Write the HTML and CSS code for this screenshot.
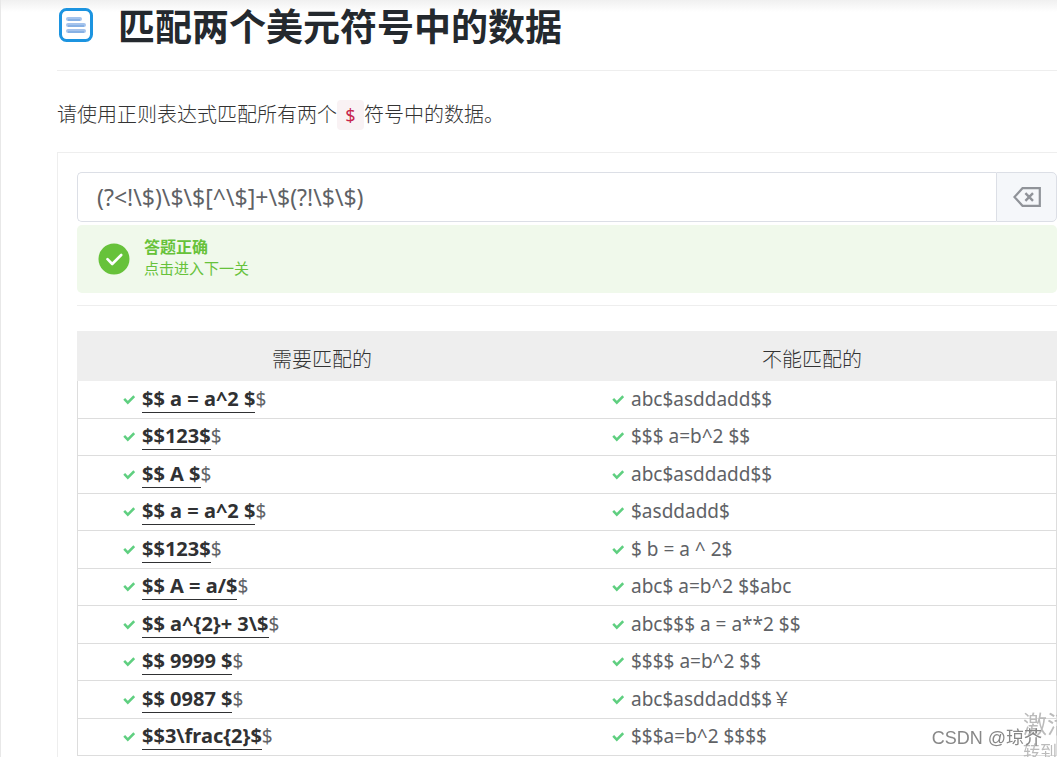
FILE: index.html
```
<!DOCTYPE html>
<html lang="zh-CN">
    <head>
        <meta charset="utf-8">
        <meta name="viewport" content="width=device-width, initial-scale=1">
        <title>匹配两个美元符号中的数据</title>
        <link rel="stylesheet" href="styles.css">
    </head>
    <body>
    <svg class="sprite" aria-hidden="true">
        <symbol id="ok" viewBox="0 0 12 12"><path d="M1.2 4.8 L4.8 8.6 L11.2 2.2" fill="none" stroke="#5fcf80" stroke-width="2.5"/></symbol>
    </svg>
    <div class="page">
        <header class="title">
            <svg class="logo" viewBox="0 0 34 34" aria-hidden="true">
                <rect x="1.5" y="1.5" width="31" height="31" rx="6" fill="#fff" stroke="#1c94e0" stroke-width="3"/>
                <path d="M9 11h12M9 17h16M9 23h16" stroke="#a5c3ec" stroke-width="4" stroke-linecap="round"/>
                <path d="M9 12h12M9 18h16M9 24h16" stroke="#6b9fdd" stroke-width="1"/>
            </svg>
            <h1>匹配两个美元符号中的数据</h1>
        </header>
        <p class="desc">请使用正则表达式匹配所有两个<code>$</code>符号中的数据。</p>
        <main class="card">
            <div class="field">
                <input type="text" id="reg" aria-label="正则表达式" value="(?&lt;!\$)\$\$[^\$]+\$(?!\$\$)" spellcheck="false">
                <button type="button" class="clear" aria-label="清空">
                    <svg viewBox="0 0 28 20"><path d="M9.5 1.2H26.8V18.8H9.5L1.4 10Z" fill="none" stroke="#909399" stroke-width="2.2"/><path d="M12.4 6.2l7.6 7.6M20 6.2l-7.6 7.6" stroke="#909399" stroke-width="2.4"/></svg>
                </button>
            </div>
            <div class="success">
                <svg class="round" viewBox="0 0 32 32" aria-hidden="true"><circle cx="16" cy="16" r="15.5" fill="#67c23a"/><path d="M9.5 16.2l4.7 4.8 9-9" fill="none" stroke="#fff" stroke-width="2.6" stroke-linecap="round" stroke-linejoin="round"/></svg>
                <div>
                    <strong>答题正确</strong>
                    <a href="#next">点击进入下一关</a>
                </div>
            </div>
            <hr>
            <table>
                <thead>
                    <tr><th>需要匹配的</th><th>不能匹配的</th></tr>
                </thead>
                <tbody>
                    <tr><td><svg><use href="#ok"/></svg><b>$$ a = a^2 $</b>$</td><td><svg><use href="#ok"/></svg>abc$asddadd$$</td></tr>
                    <tr><td><svg><use href="#ok"/></svg><b>$$123$</b>$</td><td><svg><use href="#ok"/></svg>$$$ a=b^2 $$</td></tr>
                    <tr><td><svg><use href="#ok"/></svg><b>$$ A $</b>$</td><td><svg><use href="#ok"/></svg>abc$asddadd$$</td></tr>
                    <tr><td><svg><use href="#ok"/></svg><b>$$ a = a^2 $</b>$</td><td><svg><use href="#ok"/></svg>$asddadd$</td></tr>
                    <tr><td><svg><use href="#ok"/></svg><b>$$123$</b>$</td><td><svg><use href="#ok"/></svg>$ b = a ^ 2$</td></tr>
                    <tr><td><svg><use href="#ok"/></svg><b>$$ A = a/$</b>$</td><td><svg><use href="#ok"/></svg>abc$ a=b^2 $$abc</td></tr>
                    <tr><td><svg><use href="#ok"/></svg><b>$$ a^{2}+ 3\$</b>$</td><td><svg><use href="#ok"/></svg>abc$$$ a = a**2 $$</td></tr>
                    <tr><td><svg><use href="#ok"/></svg><b>$$ 9999 $</b>$</td><td><svg><use href="#ok"/></svg>$$$$ a=b^2 $$</td></tr>
                    <tr><td><svg><use href="#ok"/></svg><b>$$ 0987 $</b>$</td><td><svg><use href="#ok"/></svg>abc$asddadd$$￥</td></tr>
                    <tr><td><svg><use href="#ok"/></svg><b>$$3\frac{2}$</b>$</td><td><svg><use href="#ok"/></svg>$$$a=b^2 $$$$</td></tr>
                </tbody>
            </table>
        </main>
    </div>
    <div class="activate">激活<small>转到设置</small></div>
    <div class="mark">CSDN @琼芥</div>
    </body>
</html>
```

FILE: styles.css
```
*{
    box-sizing: border-box;
}
body{
    margin:0;
    height:100vh;
    overflow: hidden;
    color:#606266;
    font:20px/30px "Noto Sans","Noto Sans CJK SC",sans-serif;
    background:#fff linear-gradient(#f0f0f0,#fff) no-repeat 0 0/100% 12px;
}
.sprite{
    position: absolute;
    width:0;
    height:0;
}
.page{
    border-left:1px solid #e8e8e8;
    padding-left:56px;
}
.title{
    display: flex;
    align-items: flex-start;
    height:71px;
    border-bottom:1px solid #eee;
}
.logo{
    width:34px;
    height:34px;
    margin:8px 25px 0 2px;
}
h1{
    margin:0;
    color:#24292e;
    font:bold 37px/50px "Noto Sans CJK SC",sans-serif;
}
.desc{
    margin:28px 0 22px;
    color:#333;
    font-family:"Noto Sans CJK SC",sans-serif;
    font-weight:300;
}
.desc code{
    display: inline-block;
    width:27px;
    color:#c7254e;
    font:18px/30px "Noto Sans",sans-serif;
    text-align: center;
    background:#f9f2f4;
    border-radius:4px;
}
.card{
    padding:19px 0 20px 19px;
    border:1px solid #eee;
    border-right:none;
}
.field{
    display: flex;
    height:50px;
}
.field input{
    flex:1;
    min-width:0;
    padding:0 19px;
    border:1px solid #dcdfe6;
    border-right:none;
    border-radius:5px 0 0 5px;
    color:#606266;
    font:23px "Noto Sans",sans-serif;
}
.clear{
    width:61px;
    padding:0;
    border:1px solid #dcdfe6;
    border-radius:0 5px 5px 0;
    background:#f5f7fa;
}
.clear svg{
    display: block;
    width:28px;
    height:20px;
    margin:0 auto;
}
.success{
    display: flex;
    align-items: center;
    height:68px;
    margin-top:3px;
    padding-left:21px;
    border-radius:5px;
    background:#f0f9eb;
    line-height:22px;
}
.success div{
    padding-bottom:4px;
}
.round{
    width:32px;
    height:32px;
    margin-right:14px;
}
.success strong,
.success a{
    display: block;
    color:#67c23a;
    font-family:"Noto Sans CJK SC",sans-serif;
    text-decoration: none;
}
.success strong{
    font-size:16px;
}
.success a{
    font-size:15px;
}
hr{
    height:1px;
    margin:12px 0 25px;
    border:none;
    background:#eee;
}
table{
    width:100%;
    table-layout: fixed;
    border-spacing:0;
}
th{
    height:50px;
    padding:6px 0 0;
    background:#eee;
    color:#333;
    font-family:"Noto Sans CJK SC",sans-serif;
    font-weight:300;
}
td{
    height:38px;
    padding:0 0 2px 45px;
    border-bottom:1px solid #ddd;
    font-size:19px;
    line-height:34px;
    white-space: nowrap;
}
tr:nth-child(even) td{
    height:37px;
}
td:first-child{
    border-left:1px solid #ddd;
}
td:last-child{
    border-right:1px solid #ddd;
}
td svg{
    width:12px;
    height:12px;
    margin-right:7px;
}
td b{
    color:#303133;
    border-bottom:1px solid #303133;
    font-size:20px;
}
.activate,
.mark{
    position: fixed;
    white-space: nowrap;
    font-family:"Liberation Sans","Noto Sans CJK SC",sans-serif;
}
.activate{
    left:calc(100% - 34px);
    bottom:-10px;
    color:#bbb;
    font-size:24px;
    line-height:28px;
}
.activate small{
    display: block;
    font-size:17px;
}
.mark{
    right:15px;
    bottom:4px;
    color:#888;
    font-size:18px;
}
```
